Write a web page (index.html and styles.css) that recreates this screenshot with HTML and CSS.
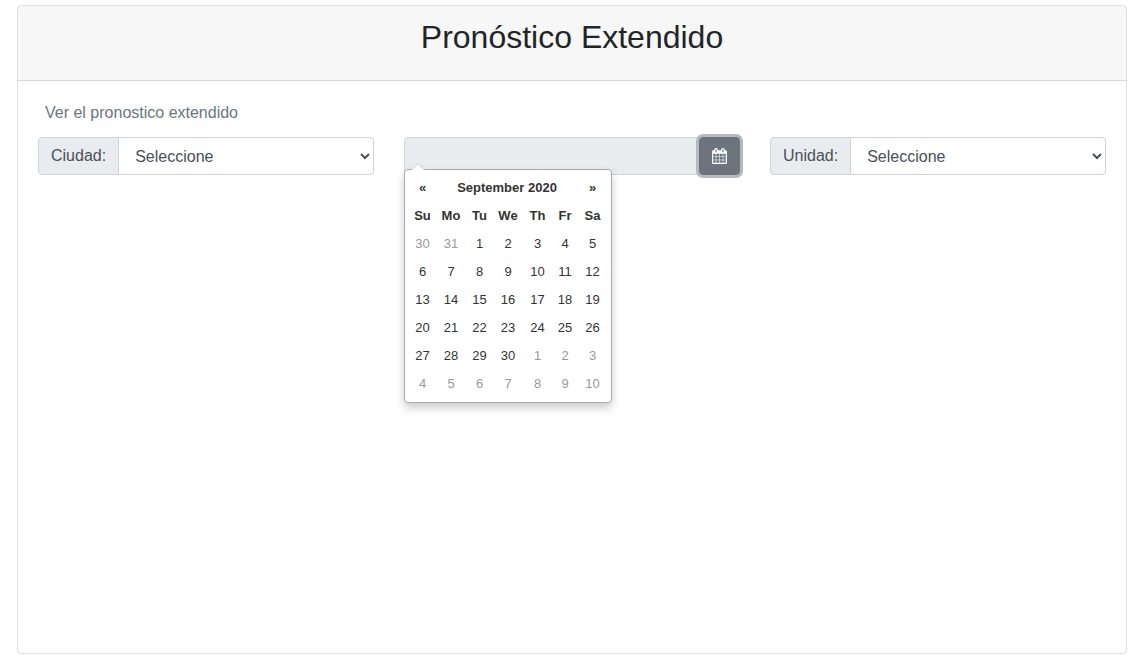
FILE: index.html
```
<!DOCTYPE html>
<html lang="es">
<head>
<meta charset="utf-8">
<meta name="viewport" content="width=device-width, initial-scale=1">
<title>Pronóstico Extendido</title>
<link rel="stylesheet" href="styles.css">
</head>
<body>
<main class="card">
  <header class="card-header">
    <h2 class="card-title">Pronóstico Extendido</h2>
  </header>
  <form class="card-body">
    <p class="card-text">Ver el pronostico extendido</p>
    <div class="fields">
      <div class="input-group">
        <label class="addon" for="ciudad">Ciudad:</label>
        <select class="control" id="ciudad"><option>Seleccione</option></select>
      </div>
      <div class="input-group">
        <input class="control date-input" type="text" aria-label="Fecha" readonly>
        <button class="calendar-button" type="button" aria-label="Abrir calendario">
          <svg class="calendar-icon" viewBox="0 0 1664 1792" aria-hidden="true"><path fill="currentColor" d="M128 1664h288v-288h-288v288zM480 1664h320v-288h-320v288zM128 1312h288v-320h-288v320zM480 1312h320v-320h-320v320zM128 928h288v-288h-288v288zM864 1664h320v-288h-320v288zM480 928h320v-288h-320v288zM1248 1664h288v-288h-288v288zM864 1312h320v-320h-320v320zM512 448v-288q0-13-9.5-22.5t-22.5-9.5h-64q-13 0-22.5 9.5t-9.5 22.5v288q0 13 9.5 22.5t22.5 9.5h64q13 0 22.5-9.5t9.5-22.5zM1248 1312h288v-320h-288v320zM864 928h320v-288h-320v288zM1248 928h288v-288h-288v288zM1280 448v-288q0-13-9.5-22.5t-22.5-9.5h-64q-13 0-22.5 9.5t-9.5 22.5v288q0 13 9.5 22.5t22.5 9.5h64q13 0 22.5-9.5t9.5-22.5zM1664 384v1280q0 52-38 90t-90 38h-1408q-52 0-90-38t-38-90v-1280q0-52 38-90t90-38h128v-96q0-66 47-113t113-47h64q66 0 113 47t47 113v96h384v-96q0-66 47-113t113-47h64q66 0 113 47t47 113v96h128q52 0 90 38t38 90z"/></svg>
        </button>
        <div class="datepicker">
          <table class="calendar">
            <colgroup>
              <col class="col-su"><col class="col-mo"><col class="col-tu"><col class="col-we"><col class="col-th"><col class="col-fr"><col class="col-sa">
            </colgroup>
            <thead>
              <tr>
                <th><button class="day" type="button" aria-label="Mes anterior">«</button></th>
                <th colspan="5"><button class="day" type="button">September 2020</button></th>
                <th><button class="day" type="button" aria-label="Mes siguiente">»</button></th>
              </tr>
              <tr class="weekdays"><th>Su</th><th>Mo</th><th>Tu</th><th>We</th><th>Th</th><th>Fr</th><th>Sa</th></tr>
            </thead>
            <tbody>
              <tr>
                <td><button class="day muted" type="button">30</button></td>
                <td><button class="day muted" type="button">31</button></td>
                <td><button class="day" type="button">1</button></td>
                <td><button class="day" type="button">2</button></td>
                <td><button class="day" type="button">3</button></td>
                <td><button class="day" type="button">4</button></td>
                <td><button class="day" type="button">5</button></td>
              </tr>
              <tr>
                <td><button class="day" type="button">6</button></td>
                <td><button class="day" type="button">7</button></td>
                <td><button class="day" type="button">8</button></td>
                <td><button class="day" type="button">9</button></td>
                <td><button class="day" type="button">10</button></td>
                <td><button class="day" type="button">11</button></td>
                <td><button class="day" type="button">12</button></td>
              </tr>
              <tr>
                <td><button class="day" type="button">13</button></td>
                <td><button class="day" type="button">14</button></td>
                <td><button class="day" type="button">15</button></td>
                <td><button class="day" type="button">16</button></td>
                <td><button class="day" type="button">17</button></td>
                <td><button class="day" type="button">18</button></td>
                <td><button class="day" type="button">19</button></td>
              </tr>
              <tr>
                <td><button class="day" type="button">20</button></td>
                <td><button class="day" type="button">21</button></td>
                <td><button class="day" type="button">22</button></td>
                <td><button class="day" type="button">23</button></td>
                <td><button class="day" type="button">24</button></td>
                <td><button class="day" type="button">25</button></td>
                <td><button class="day" type="button">26</button></td>
              </tr>
              <tr>
                <td><button class="day" type="button">27</button></td>
                <td><button class="day" type="button">28</button></td>
                <td><button class="day" type="button">29</button></td>
                <td><button class="day" type="button">30</button></td>
                <td><button class="day muted" type="button">1</button></td>
                <td><button class="day muted" type="button">2</button></td>
                <td><button class="day muted" type="button">3</button></td>
              </tr>
              <tr>
                <td><button class="day muted" type="button">4</button></td>
                <td><button class="day muted" type="button">5</button></td>
                <td><button class="day muted" type="button">6</button></td>
                <td><button class="day muted" type="button">7</button></td>
                <td><button class="day muted" type="button">8</button></td>
                <td><button class="day muted" type="button">9</button></td>
                <td><button class="day muted" type="button">10</button></td>
              </tr>
            </tbody>
          </table>
        </div>
      </div>
      <div class="input-group">
        <label class="addon" for="unidad">Unidad:</label>
        <select class="control" id="unidad"><option>Seleccione</option></select>
      </div>
    </div>
  </form>
</main>
</body>
</html>
```
FILE: styles.css
```
*, *::before, *::after { box-sizing: border-box; }

body {
  margin: 0;
  padding: 5px 20px 14px 17px;
  min-height: 100vh;
  display: flex;
  background: #fff;
  color: #212529;
  font-family: "Liberation Sans", Arial, sans-serif;
  font-size: 16px;
  line-height: 24px;
}

.card {
  flex: 1;
  min-width: 0;
  border: 1px solid rgba(0, 0, 0, .125);
  border-radius: 4px;
}

.card-header {
  padding: 12px 20px 24px;
  background: rgba(0, 0, 0, .03);
  border-bottom: 1px solid rgba(0, 0, 0, .125);
  text-align: center;
}

.card-title {
  margin: 0;
  font-size: 32px;
  font-weight: 500;
  line-height: 38px;
}

.card-body { padding: 20px; }

.card-text {
  margin: 0 0 12px;
  padding: 0 7px;
  color: #6c757d;
}

.fields {
  display: grid;
  grid-template-columns: repeat(auto-fit, minmax(280px, 1fr));
  gap: 30px;
}

.input-group {
  position: relative;
  display: flex;
  min-width: 0;
}

.addon {
  padding: 6px 12px;
  border: 1px solid #ced4da;
  border-radius: 4px 0 0 4px;
  background: #e9ecef;
  color: #495057;
}

.control {
  flex: 1;
  min-width: 0;
  height: 38px;
  margin: 0 0 0 -1px;
  padding: 6px 12px;
  border: 1px solid #ced4da;
  border-radius: 0 4px 4px 0;
  background: #fff;
  color: #495057;
  font: inherit;
}

.date-input {
  margin: 0;
  border-radius: 4px 0 0 4px;
  background: #e9ecef;
}

.calendar-button {
  position: relative;
  display: flex;
  align-items: center;
  margin: 0 0 0 -1px;
  padding: 0 12px;
  border: 1px solid #6c757d;
  border-radius: 4px;
  background: #6c757d;
  color: #fff;
  box-shadow: 0 0 0 3px #b5b8bc;
}

.calendar-icon {
  display: block;
  width: 15px;
  height: 16px;
}

.datepicker {
  position: absolute;
  z-index: 1;
  top: 32px;
  left: 0;
  padding: 4px;
  border: 1px solid #aaa;
  border-radius: 4px;
  background: #fff;
  box-shadow: 0 5px 10px rgba(0, 0, 0, .2);
  color: #333;
  font-size: 13px;
  line-height: 20px;
}

.datepicker::before,
.datepicker::after {
  content: "";
  position: absolute;
  border-style: solid;
  border-color: transparent;
  border-top-width: 0;
}

.datepicker::before {
  top: -7px;
  left: 6px;
  border-width: 0 7px 7px;
  border-bottom-color: #c4c7ca;
}

.datepicker::after {
  top: -6px;
  left: 7px;
  border-width: 0 6px 6px;
  border-bottom-color: #fff;
}

.calendar {
  width: 198px;
  table-layout: fixed;
  border-collapse: collapse;
  text-align: center;
}

.col-su, .col-tu { width: 27px; }
.col-mo, .col-we { width: 30px; }
.col-th, .col-sa { width: 29px; }
.col-fr { width: 26px; }

.calendar th,
.calendar td { padding: 0; }

.calendar .weekdays th { padding: 4px 0; }

.day {
  display: block;
  width: 100%;
  padding: 4px 0;
  border: 0;
  border-radius: 4px;
  background: transparent;
  color: inherit;
  font: inherit;
  text-align: center;
}

.muted { color: #999; }
```
